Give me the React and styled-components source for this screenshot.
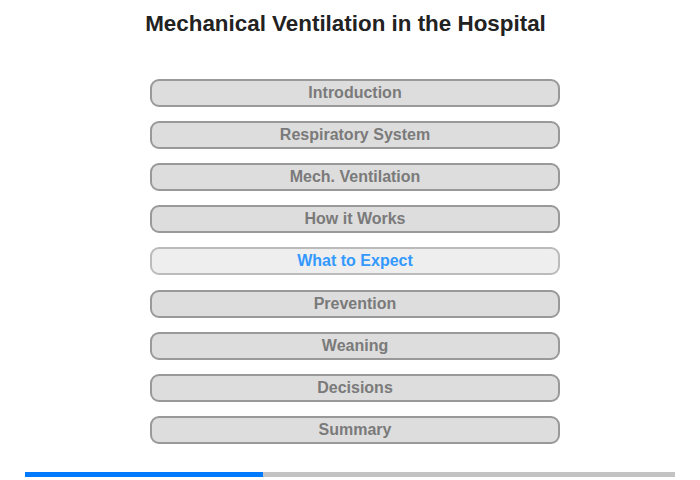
import React from "react";
import styled, { createGlobalStyle } from "styled-components";

const GlobalStyle = createGlobalStyle`
  body {
    margin: 0;
    background: #fff;
    font-family: "Liberation Sans", Arial, sans-serif;
  }
`;

const Page = styled.div`
  width: 700px;
  height: 480px;
  display: flex;
  flex-direction: column;
`;

const Title = styled.h1`
  margin: 11px 0 0 0;
  padding-right: 9px;
  height: 26px;
  line-height: 26px;
  text-align: center;
  font-size: 22.4px;
  font-weight: bold;
  color: #222;
`;

const Menu = styled.nav`
  display: flex;
  flex-direction: column;
  gap: 14.11px;
  margin: 42px 0 0 150px;
  width: 410px;
`;

const MenuButton = styled.div`
  box-sizing: border-box;
  height: 28px;
  border: 2px solid ${(p) => (p.active ? "#bbb" : "#999")};
  border-radius: 9px;
  background: ${(p) => (p.active ? "#eee" : "#ddd")};
  color: ${(p) => (p.active ? "#3399ff" : "#7a7a7a")};
  font-size: 16px;
  font-weight: bold;
  line-height: 24px;
  text-align: center;
  cursor: pointer;
`;

const Progress = styled.div`
  margin: 28px 0 0 25px;
  width: 650px;
  height: 5px;
  background: #c3c3c3;
  display: flex;
`;

const ProgressFill = styled.div`
  height: 100%;
  background: #007bff;
`;

const items = [
  "Introduction",
  "Respiratory System",
  "Mech. Ventilation",
  "How it Works",
  "What to Expect",
  "Prevention",
  "Weaning",
  "Decisions",
  "Summary",
];

const App = () => {
  const current = 4;
  return (
    <>
      <GlobalStyle />
      <Page>
        <Title>Mechanical Ventilation in the Hospital</Title>
        <Menu>
          {items.map((label, i) => (
            <MenuButton key={label} active={i === current}>
              {label}
            </MenuButton>
          ))}
        </Menu>
        <Progress>
          <ProgressFill style={{ width: `${(238 / 650) * 100}%` }} />
        </Progress>
      </Page>
    </>
  );
};

export default App;
